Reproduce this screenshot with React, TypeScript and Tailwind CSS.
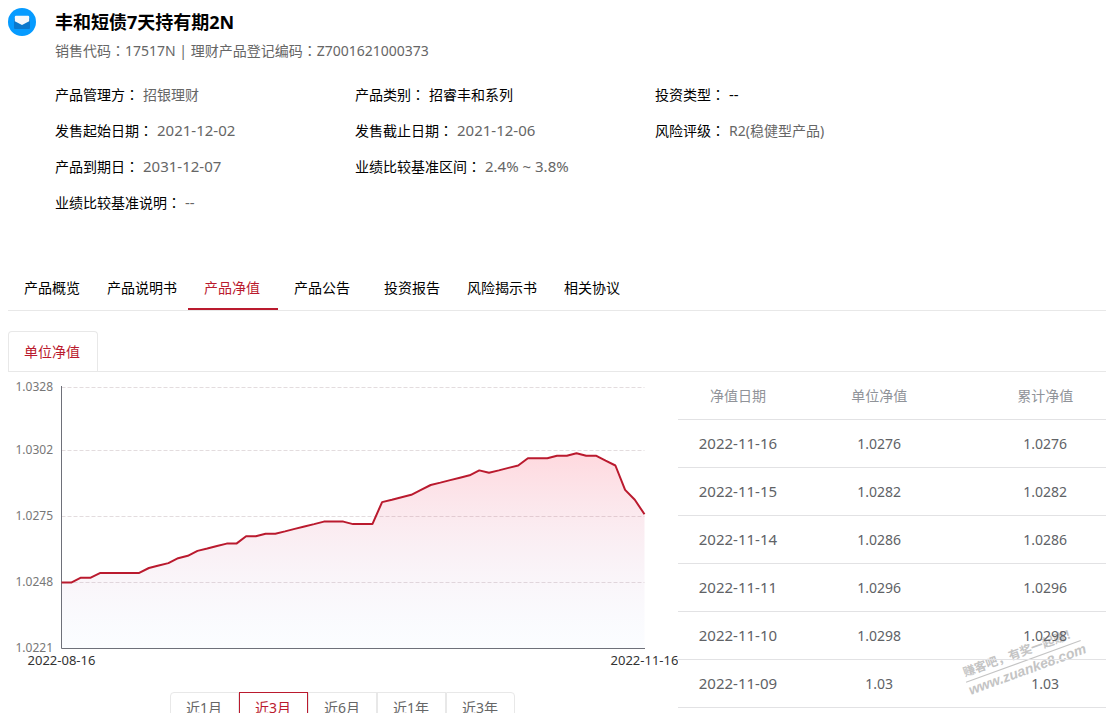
import { useState } from 'react';

interface InfoItem {
  label: string;
  value: string;
  dark?: boolean;
}

const infoRows: InfoItem[][] = [
  [
    { label: '产品管理方', value: '招银理财' },
    { label: '产品类别', value: '招睿丰和系列', dark: true },
    { label: '投资类型', value: '--', dark: true },
  ],
  [
    { label: '发售起始日期', value: '2021-12-02' },
    { label: '发售截止日期', value: '2021-12-06' },
    { label: '风险评级', value: 'R2(稳健型产品)' },
  ],
  [
    { label: '产品到期日', value: '2031-12-07' },
    { label: '业绩比较基准区间', value: '2.4% ~ 3.8%' },
  ],
  [{ label: '业绩比较基准说明', value: '--' }],
];

const tabs = ['产品概览', '产品说明书', '产品净值', '产品公告', '投资报告', '风险揭示书', '相关协议'];

const ranges = ['近1月', '近3月', '近6月', '近1年', '近3年'];

const navRows = [
  { date: '2022-11-16', value: '1.0276' },
  { date: '2022-11-15', value: '1.0282' },
  { date: '2022-11-14', value: '1.0286' },
  { date: '2022-11-11', value: '1.0296' },
  { date: '2022-11-10', value: '1.0298' },
  { date: '2022-11-09', value: '1.03' },
];

// net value minus 1.02, in 1/10000
const series = [
  48, 48, 50, 50, 52, 52, 52, 52, 52, 54, 55, 56, 58, 59, 61, 62, 63, 64, 64, 67, 67,
  68, 68, 69, 70, 71, 72, 73, 73, 73, 72, 72, 72, 81, 82, 83, 84, 86, 88, 89, 90,
  91, 92, 94, 93, 94, 95, 96, 99, 99, 99, 100, 100, 101, 100, 100, 98, 96, 86, 82, 76,
];

const yTicks = [
  { label: '1.0328', y: 15.5 },
  { label: '1.0302', y: 78.5 },
  { label: '1.0275', y: 144.5 },
  { label: '1.0248', y: 210.5 },
  { label: '1.0221', y: 276.5 },
];

const LEFT = 53.5;
const RIGHT = 636.5;
const BOTTOM = 276.5;

function Colon() {
  return <span className="font-['Noto_Sans_CJK_TC',sans-serif]">：</span>;
}

function MailLogo() {
  return (
    <svg width="28" height="28" viewBox="0 0 28 28" className="shrink-0" aria-hidden="true">
      <circle cx="14" cy="14" r="14" fill="#069bff" />
      <path d="M6 10.500h16v9.500q0 1-1 1H7q-1 0-1-1z" fill="#0b78cc" />
      <path d="M8 7.700h12q1.200 0 1.200 1.200v4.300L14 17 6.800 13.200V8.900Q6.800 7.700 8 7.700z" fill="#f6f8fb" />
    </svg>
  );
}

function NavChart() {
  const step = (RIGHT - LEFT) / (series.length - 1);
  const line = series
    .map((v, i) => `${(LEFT + i * step).toFixed(1)},${(BOTTOM - (v - 21) * 2.44).toFixed(1)}`)
    .join(' ');

  return (
    <svg viewBox="0 0 670 300" className="block w-full" role="img" aria-label="单位净值">
      <defs>
        <linearGradient id="navArea" x1="0" y1="0" x2="0" y2="1">
          <stop offset="0" stopColor="#ff2040" stopOpacity="0.17" />
          <stop offset="1" stopColor="#a0c8ff" stopOpacity="0.04" />
        </linearGradient>
      </defs>
      {yTicks.slice(0, 4).map((t) => (
        <line key={t.label} x1={LEFT} x2={RIGHT} y1={t.y} y2={t.y} stroke="#e3dcde" strokeDasharray="4 2" />
      ))}
      <polygon points={`${LEFT},${BOTTOM} ${line} ${RIGHT},${BOTTOM}`} fill="url(#navArea)" />
      <path d={`M${LEFT} 14V${BOTTOM}H${RIGHT + 0.5}`} fill="none" stroke="#6e7079" />
      <polyline points={line} fill="none" stroke="#ba1a2e" strokeWidth="2" strokeLinejoin="bevel" />
      {yTicks.map((t) => (
        <text key={t.label} x="45" y={t.y + 3} textAnchor="end" fontSize="12" fill="#777777">
          {t.label}
        </text>
      ))}
      <text x={LEFT} y="293" textAnchor="middle" fontSize="13" fill="#333333">
        2022-08-16
      </text>
      <text x={RIGHT} y="293" textAnchor="middle" fontSize="13" fill="#333333">
        2022-11-16
      </text>
    </svg>
  );
}

function NavTable() {
  return (
    <table className="relative w-full table-fixed border-separate border-spacing-0 text-center text-sm text-[#606266]">
      <colgroup>
        <col className="w-[28%]" />
        <col className="w-[38%]" />
        <col className="w-[34%]" />
      </colgroup>
      <thead>
        <tr className="h-12 text-[#909399] [&>th]:border-b [&>th]:border-[#e2e2e4] [&>th]:font-normal">
          <th>净值日期</th>
          <th>单位净值</th>
          <th className="pl-6">累计净值</th>
        </tr>
      </thead>
      <tbody>
        {navRows.map((row) => (
          <tr key={row.date} className="h-12 [&>td]:border-b [&>td]:border-[#e2e2e4]">
            <td className="text-[15px]">{row.date}</td>
            <td>{row.value}</td>
            <td className="pl-6">{row.value}</td>
          </tr>
        ))}
      </tbody>
    </table>
  );
}

function Watermark() {
  return (
    <div className="pointer-events-none absolute right-[22px] bottom-[30px] w-[122px] -rotate-[20deg] text-center font-bold whitespace-nowrap text-[#c4c4c4] select-none">
      <div className="border-b border-[#c4c4c4] text-xs leading-[18px]">赚客吧，有奖一起赚！</div>
      <div className="font-['Liberation_Sans',sans-serif] text-[14px] leading-4 italic">www.zuanke8.com</div>
    </div>
  );
}

export default function App() {
  const [tab, setTab] = useState('产品净值');
  const [range, setRange] = useState('近3月');

  return (
    <div className="overflow-hidden bg-white pt-2 pl-2 font-['Noto_Sans','Noto_Sans_CJK_SC',sans-serif] text-sm text-black">
      <header className="flex gap-[19px]">
        <MailLogo />
        <div className="min-w-0 flex-1">
          <h1 className="text-lg leading-7 font-bold">丰和短债7天持有期2N</h1>
          <p className="leading-7 text-[#666666]">
            销售代码<Colon />17517N | 理财产品登记编码<Colon />Z7001621000373
          </p>
          <dl className="mt-[11px] max-w-[900px]">
            {infoRows.map((row) => (
              <div key={row[0].label} className="grid grid-cols-3 leading-9">
                {row.map((item) => (
                  <div key={item.label} className="flex h-9 items-baseline gap-1 whitespace-nowrap">
                    <dt>
                      {item.label}
                      <Colon />
                    </dt>
                    <dd
                      className={`${item.dark ? 'text-black' : 'text-[#666666]'} ${
                        /^[\d-]/.test(item.value) ? 'text-[15px]' : 'text-sm'
                      } leading-9`}
                    >
                      {item.value}
                    </dd>
                  </div>
                ))}
              </div>
            ))}
          </dl>
        </div>
      </header>

      <nav className="mt-[45px] flex border-b border-[#e8e8e8]">
        {tabs.map((name) => (
          <button
            key={name}
            type="button"
            onClick={() => setTab(name)}
            className={`h-[45px] w-[90px] border-b-2 pt-0.5 pr-0.5 ${
              tab === name ? 'border-[#ba1a2e] text-[#ba1a2e]' : 'border-transparent'
            }`}
          >
            {name}
          </button>
        ))}
      </nav>

      <div className="mt-5 border-b border-[#e8e8e8]">
        <button
          type="button"
          className="block h-10 w-[90px] rounded-t border border-b-0 border-[#e8e8e8] pr-0.5 text-[#ba1a2e]"
        >
          单位净值
        </button>
      </div>

      <main className="grid grid-cols-[670fr_428fr] items-start">
        <section>
          <NavChart />
          <div className="mt-5 flex justify-center pr-0.5">
            {ranges.map((name) => (
              <button
                key={name}
                type="button"
                onClick={() => setRange(name)}
                className={`h-8 w-[69px] border first:rounded-l last:rounded-r ${
                  range === name ? 'border-[#ba1a2e] text-[#ba1a2e]' : 'border-[#e8e8e8] text-[#666666]'
                }`}
              >
                {name}
              </button>
            ))}
          </div>
        </section>
        <section className="relative">
          <Watermark />
          <NavTable />
        </section>
      </main>
    </div>
  );
}
